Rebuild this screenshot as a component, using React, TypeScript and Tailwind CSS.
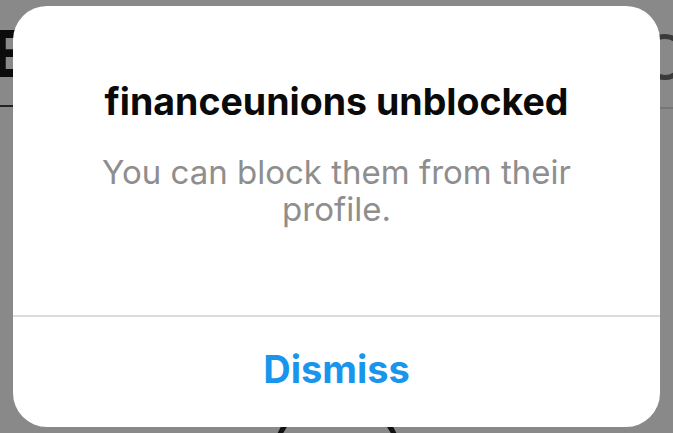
export default function App() {
  return (
    <div className="relative h-[433px] w-[673px] overflow-hidden bg-[#898989] font-['Inter',sans-serif]">
      {/* page behind the dialog */}
      <span className="absolute left-[-8px] top-[14px] text-[64px] font-bold leading-[80px] text-[#0c0c0c]">E</span>
      <div className="absolute left-0 top-[105px] h-[2px] w-[20px] bg-[#222]" />
      <div className="absolute left-[645px] top-[34px] h-[46px] w-[40px] rounded-full border-[5px] border-[#3a3a3a]" />
      <div className="absolute left-[650px] top-[107px] h-[2px] w-[30px] bg-[#777]" />
      <div className="absolute left-[272px] top-[395px] h-[130px] w-[130px] rounded-full border-[5px] border-[#111]" />

      {/* dialog */}
      <div className="relative flex h-full flex-col px-[13px] pb-[6px] pt-[6px]">
        <div className="flex flex-1 flex-col overflow-hidden rounded-[34px] bg-white">
          <div className="flex h-[309px] flex-col items-center px-8 pt-[74px] text-center">
            <p className="whitespace-nowrap text-[37.5px] font-bold leading-[44px] text-[#0a0a0a]">
              financeunions unblocked
            </p>
            <p className="mt-[30px] w-[500px] text-[33px] leading-[37px] text-[#8e8e8e]">
              You can block them from their profile.
            </p>
          </div>
          <div className="h-[2px] bg-[#dcdcdc]" />
          <button className="flex flex-1 items-center justify-center pb-[6px] text-[38px] font-bold text-[#1a95ec]">
            Dismiss
          </button>
        </div>
      </div>
    </div>
  );
}
